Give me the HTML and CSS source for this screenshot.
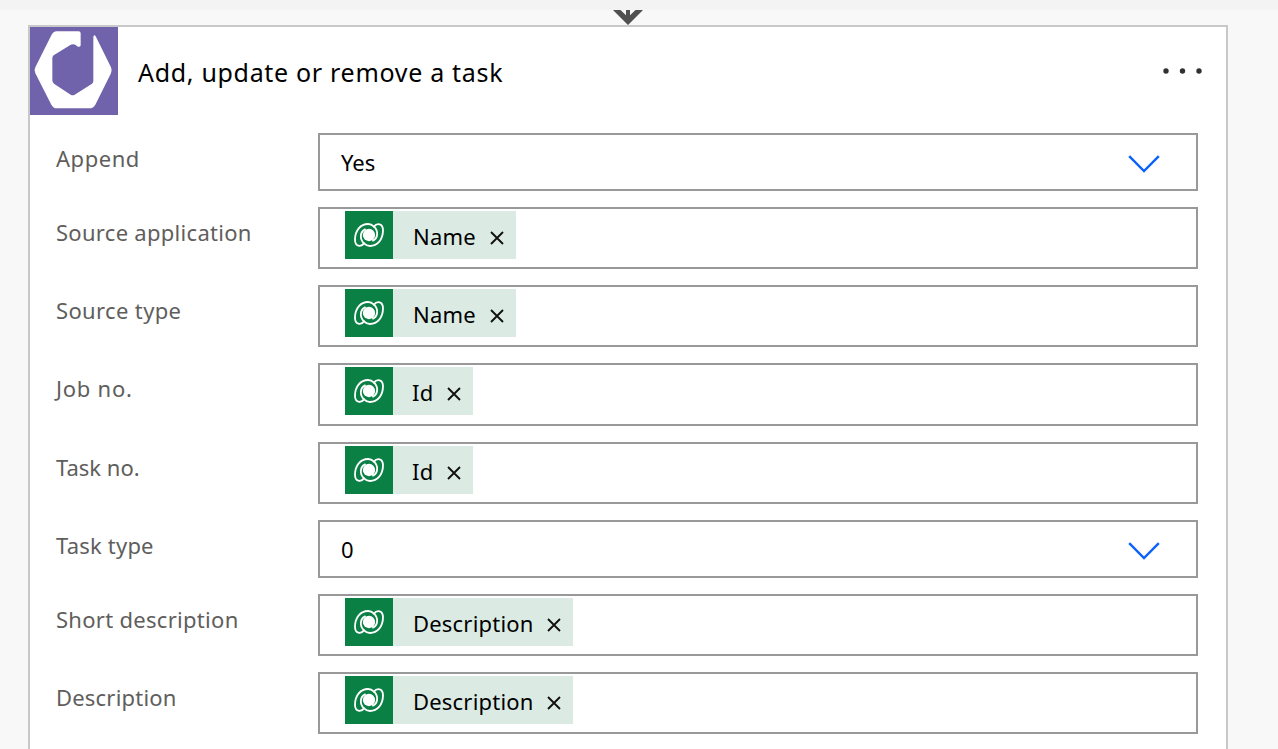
FILE: index.html
```html
<!DOCTYPE html>
<html lang="en">
<head>
<meta charset="utf-8">
<title>Add, update or remove a task</title>
<link rel="stylesheet" href="styles.css">
</head>
<body>
<svg class="defs" width="0" height="0" aria-hidden="true">
  <symbol id="dataverse" viewBox="0 0 144 144">
    <g id="blade" fill="none" stroke="#fff" stroke-width="5.5" stroke-linecap="round">
      <path d="M57 97C48 109 30 107 30 86C30 58 47 39 69 39C78 39 83 43 87 47C101 60 99 82 84 89"/>
    </g>
    <use href="#blade" transform="rotate(180 72 72)"/>
    <circle cx="72" cy="72" r="18.5" fill="#fff"/>
  </symbol>
  <symbol id="close" viewBox="0 0 14 14"><path d="M1 1L13 13M13 1L1 13" stroke="#111" stroke-width="1.9"/></symbol>
  <symbol id="chevron" viewBox="0 0 32 18"><path d="M1.2 1.2L16 16L30.8 1.2" fill="none" stroke="#0b62fb" stroke-width="2.4"/></symbol>
</svg>
<div class="strip"></div>
<div class="connector">
  <svg width="30" height="15" viewBox="0 0 30 15"><path d="M0 0H7.5L13 5.2V0H17V5.2L22.5 0H30L15 15Z" fill="#505050"/></svg>
</div>
<main class="card">
  <header class="head">
    <svg class="logo" viewBox="0 0 264 264"><rect width="264" height="264" fill="#7063ab"/><path d="M80 13H146Q152 13 152 19V55Q152 60 146 59Q142 59 140 56Q130 49 121 54L71 85Q67 88 67 93V160Q67 166 72 170L122 203Q128 207 134 203L186 170Q190 167 190 163V29Q193 21 197 28L243 121Q247 130 243 139L196 233Q190 244 178 244H80Q70 244 64 233L16 139Q11 130 16 121L64 25Q70 13 80 13Z" fill="#fff"/></svg>
    <h1 class="title">Add, update or remove a task</h1>
    <svg class="more" width="40" height="6" viewBox="0 0 40 6" fill="#303030"><circle cx="3" cy="3" r="2.7"/><circle cx="19.5" cy="3" r="2.7"/><circle cx="36" cy="3" r="2.7"/></svg>
  </header>
  <div class="rows">
    <div class="row"><span class="label l-append">Append</span><div class="field select"><span class="value">Yes</span><svg class="chevron"><use href="#chevron"/></svg></div></div>
    <div class="row"><span class="label l-app">Source application</span><div class="field"><span class="token t-name"><span class="icon"><svg><use href="#dataverse"/></svg></span><span class="text">Name</span><svg class="close"><use href="#close"/></svg></span></div></div>
    <div class="row"><span class="label l-type">Source type</span><div class="field"><span class="token t-name"><span class="icon"><svg><use href="#dataverse"/></svg></span><span class="text">Name</span><svg class="close"><use href="#close"/></svg></span></div></div>
    <div class="row"><span class="label l-job">Job no.</span><div class="field tall"><span class="token t-id"><span class="icon"><svg><use href="#dataverse"/></svg></span><span class="text">Id</span><svg class="close"><use href="#close"/></svg></span></div></div>
    <div class="row"><span class="label l-task">Task no.</span><div class="field"><span class="token t-id"><span class="icon"><svg><use href="#dataverse"/></svg></span><span class="text">Id</span><svg class="close"><use href="#close"/></svg></span></div></div>
    <div class="row"><span class="label l-ttype">Task type</span><div class="field select"><span class="value">0</span><svg class="chevron"><use href="#chevron"/></svg></div></div>
    <div class="row"><span class="label l-short">Short description</span><div class="field"><span class="token t-desc"><span class="icon"><svg><use href="#dataverse"/></svg></span><span class="text">Description</span><svg class="close"><use href="#close"/></svg></span></div></div>
    <div class="row"><span class="label l-desc">Description</span><div class="field"><span class="token t-desc"><span class="icon"><svg><use href="#dataverse"/></svg></span><span class="text">Description</span><svg class="close"><use href="#close"/></svg></span></div></div>
  </div>
</main>
</body>
</html>
```
FILE: styles.css
```css
* { box-sizing: border-box; }
body { margin: 0; height: 749px; overflow: hidden; background: #f8f8f8; font-family: "Noto Sans", sans-serif; font-size: 22px; color: #000; }
svg { display: block; flex: none; }
.defs { position: absolute; }
.strip { height: 10px; background: #f3f3f3; }
.connector { height: 15px; padding-left: 613px; }
.card { width: 1200px; height: 760px; margin-left: 28px; border: 2px solid #c8c8c8; background: #fff; }
.head { display: flex; height: 88px; }
.logo { width: 88px; height: 88px; }
.title { flex: 1; margin: 0; padding-left: 20px; font-size: 25px; font-weight: 400; line-height: 90px; letter-spacing: 0.69px; white-space: nowrap; }
.more { margin: 41px 23px 0 0; }
.rows { display: flex; flex-direction: column; gap: 16px; padding: 18px 28px 0 26px; }
.row { display: flex; }
.label { width: 262px; line-height: 51px; height: 51px; color: #605e5c; white-space: nowrap; }
.l-append { letter-spacing: 0.55px; }
.l-app { letter-spacing: 0.29px; }
.l-type { letter-spacing: 0.36px; }
.l-job { letter-spacing: 0.75px; }
.l-ttype { letter-spacing: 0.2px; }
.l-short { letter-spacing: 0.29px; }
.l-desc { letter-spacing: 0.2px; }
.field { flex: 1; display: flex; height: 62px; padding: 2px 0 0 25px; border: 2px solid #999; background: #fff; }
.tall { height: 63px; }
.select { height: 58px; padding: 0 36px 0 21px; justify-content: space-between; }
.value { line-height: 55px; }
.chevron { width: 32px; height: 18px; margin-top: 20px; }
.token { display: flex; height: 48px; background: #dbebe3; line-height: 51px; }
.icon { width: 48px; height: 48px; background: #0a8044; }
.icon svg { width: 48px; height: 48px; }
.text { flex: 1; padding-left: 20px; white-space: nowrap; letter-spacing: 0.2px; }
.close { width: 14px; height: 14px; margin: 20.4px 12px 0 0; }
.t-name { width: 171px; }
.t-id { width: 128px; }
.t-id .text { padding-left: 19px; }
.t-desc { width: 228px; }
```
